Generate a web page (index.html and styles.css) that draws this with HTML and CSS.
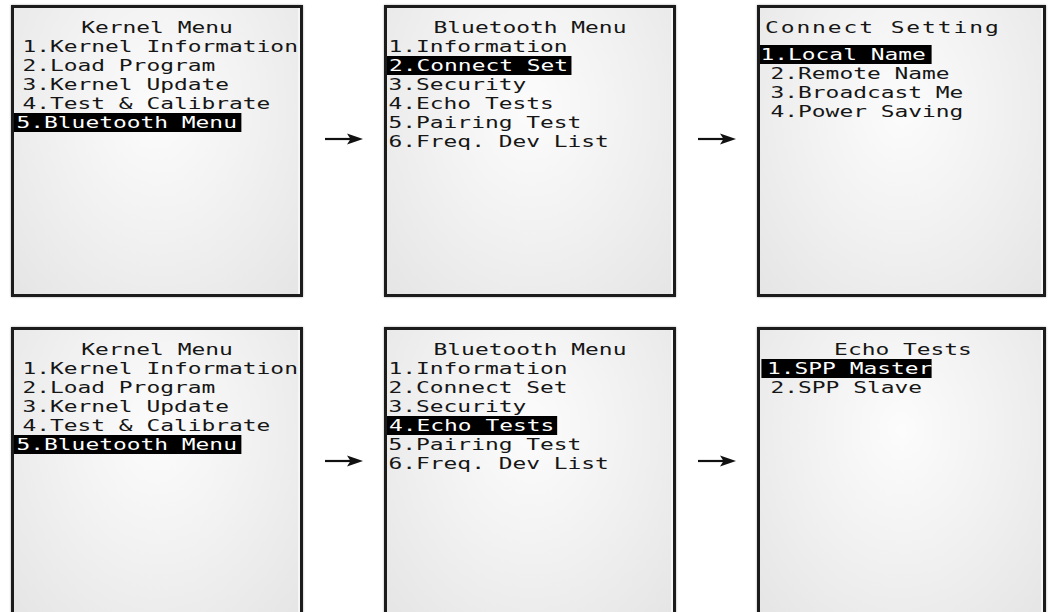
FILE: index.html
```html
<!DOCTYPE html>
<html>
<head>
  <title>Bluetooth Menu</title>
  <link rel="stylesheet" href="styles.css">
</head>
<body>
  <div class="board">
    <!-- row 1: Kernel Menu -> Bluetooth Menu -> Connect Setting -->
    <div class="screen kernel">
      <div class="lcd">
        <div class="title">Kernel Menu</div>
        <ul class="menu">
          <li>1.Kernel Information</li>
          <li>2.Load Program</li>
          <li>3.Kernel Update</li>
          <li>4.Test &amp; Calibrate</li>
          <li><span class="sel">5.Bluetooth Menu</span></li>
        </ul>
      </div>
    </div>
    <div class="arrow">
      <svg width="38" height="12" viewBox="0 0 38 12"><line x1="0" y1="6" x2="28" y2="6" stroke="#111" stroke-width="2.2"/><polygon points="22,0.5 38,6 22,11.5 25.5,6" fill="#111"/></svg>
    </div>
    <div class="screen bt">
      <div class="lcd">
        <div class="title">Bluetooth Menu</div>
        <ul class="menu">
          <li>1.Information</li>
          <li><span class="sel">2.Connect Set</span></li>
          <li>3.Security</li>
          <li>4.Echo Tests</li>
          <li>5.Pairing Test</li>
          <li>6.Freq. Dev List</li>
        </ul>
      </div>
    </div>
    <div class="arrow">
      <svg width="38" height="12" viewBox="0 0 38 12"><line x1="0" y1="6" x2="28" y2="6" stroke="#111" stroke-width="2.2"/><polygon points="22,0.5 38,6 22,11.5 25.5,6" fill="#111"/></svg>
    </div>
    <div class="screen connect">
      <div class="lcd">
        <div class="title title-wide">Connect Setting</div>
        <ul class="menu">
          <li><span class="sel">1.Local Name</span></li>
          <li>2.Remote Name</li>
          <li>3.Broadcast Me</li>
          <li>4.Power Saving</li>
        </ul>
      </div>
    </div>

    <!-- row 2: Kernel Menu -> Bluetooth Menu -> Echo Tests -->
    <div class="screen kernel">
      <div class="lcd">
        <div class="title">Kernel Menu</div>
        <ul class="menu">
          <li>1.Kernel Information</li>
          <li>2.Load Program</li>
          <li>3.Kernel Update</li>
          <li>4.Test &amp; Calibrate</li>
          <li><span class="sel">5.Bluetooth Menu</span></li>
        </ul>
      </div>
    </div>
    <div class="arrow">
      <svg width="38" height="12" viewBox="0 0 38 12"><line x1="0" y1="6" x2="28" y2="6" stroke="#111" stroke-width="2.2"/><polygon points="22,0.5 38,6 22,11.5 25.5,6" fill="#111"/></svg>
    </div>
    <div class="screen bt">
      <div class="lcd">
        <div class="title">Bluetooth Menu</div>
        <ul class="menu">
          <li>1.Information</li>
          <li>2.Connect Set</li>
          <li>3.Security</li>
          <li><span class="sel">4.Echo Tests</span></li>
          <li>5.Pairing Test</li>
          <li>6.Freq. Dev List</li>
        </ul>
      </div>
    </div>
    <div class="arrow">
      <svg width="38" height="12" viewBox="0 0 38 12"><line x1="0" y1="6" x2="28" y2="6" stroke="#111" stroke-width="2.2"/><polygon points="22,0.5 38,6 22,11.5 25.5,6" fill="#111"/></svg>
    </div>
    <div class="screen echo">
      <div class="lcd">
        <div class="title">Echo Tests</div>
        <ul class="menu">
          <li><span class="sel">1.SPP Master</span></li>
          <li>2.SPP Slave</li>
        </ul>
      </div>
    </div>
  </div>
</body>
</html>
```

FILE: styles.css
```css
html, body {
  margin: 0;
  height: 612px;
  overflow: hidden;
  background: #fff;
}

.board {
  display: grid;
  grid-template-columns: 292px 81px 292px 81px 289px;
  grid-template-rows: 292px 292px;
  row-gap: 30px;
  padding: 5px 0 0 11px;
}

.screen {
  box-sizing: border-box;
  padding-top: 10px;
  border: 3px solid #1c1c1c;
  background: radial-gradient(ellipse at 50% 35%, #fcfcfc 0%, #f2f2f2 45%, #e5e5e5 100%);
  box-shadow: 0 0 2px rgba(0, 0, 0, 0.35), inset -2px 0 0 #f6f6f6;
  overflow: hidden;
}

/* the LCD font is wide and short: DejaVu Sans Mono stretched sideways */
.lcd {
  width: 200px;
  transform: scaleX(1.43);
  transform-origin: 0 0;
  font-family: "DejaVu Sans Mono", monospace;
  font-size: 16px;
  line-height: 19px;
  color: #161616;
}

.title {
  text-align: center;
  white-space: pre;
}

.title-wide {
  text-align: left;
  padding-left: 3.5px;
  letter-spacing: 1.35px;
}

.menu {
  list-style: none;
  margin: 0;
  padding: 0 0 0 var(--indent);
}

.menu li {
  white-space: pre;
  height: 19px;
}

.sel {
  display: inline-block;
  margin-left: var(--sel-x);
  padding: 0 var(--sel-r) 0 var(--sel-l);
  background: #000;
  color: #fff;
}

/* where each screen puts its text column and the highlight bar (unscaled px) */
.kernel  { --indent: 5.9px; --sel-x: -5.9px; --sel-l: 1.75px; --sel-r: 2.9px; }
.bt      { --indent: 1.05px; --sel-x: -1.05px; --sel-l: 1.4px; --sel-r: 1.9px; }
.connect { --indent: 7.35px; --sel-x: -7.35px; --sel-l: 0.35px; --sel-r: 4.2px; }
.echo    { --indent: 7.35px; --sel-x: -6.65px; --sel-l: 4.2px; --sel-r: 0px; }

.connect .menu {
  margin-top: 8px;
}

.arrow {
  display: flex;
  justify-content: center;
  align-items: flex-start;
  padding-top: 128px;
}
```
